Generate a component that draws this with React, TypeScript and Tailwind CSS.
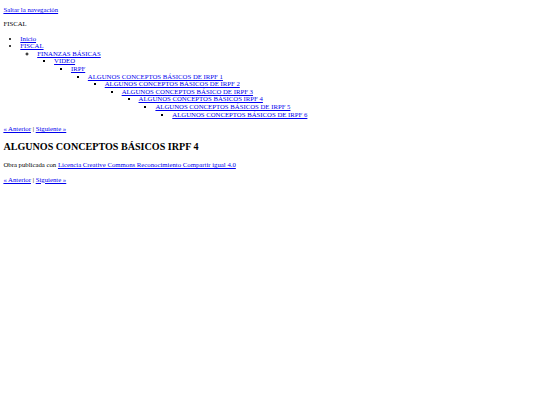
const link = 'text-[#0000ee] underline';

const chain = [
  'ALGUNOS CONCEPTOS BÁSICOS DE IRPF 1',
  'ALGUNOS CONCEPTOS BÁSICOS DE IRPF 2',
  'ALGUNOS CONCEPTOS BÁSICO DE IRPF 3',
  'ALGUNOS CONCEPTOS BÁSICOS IRPF 4',
  'ALGUNOS CONCEPTOS BÁSICOS DE IRPF 5',
  'ALGUNOS CONCEPTOS BÁSICOS DE IRPF 6',
];

// each entry nests inside the one before it
const Chain = ({ items }: { items: string[] }) => {
  if (items.length === 0) return null;
  const [first, ...rest] = items;
  return (
    <ul className="list-[square] pl-[16.9px]">
      <li>
        <a href="#" className={link}>{first}</a>
        <Chain items={rest} />
      </li>
    </ul>
  );
};

const Pager = () => (
  <p>
    <a href="#" className={link}>« Anterior</a> | <a href="#" className={link}>Siguiente »</a>
  </p>
);

export default function App() {
  return (
    <div className="min-h-[405px] bg-white px-[3.4px] pt-[6.2px] font-['Liberation_Serif',serif] text-[6.75px] leading-[7.6px] text-black">
      <p>
        <a href="#" className={link}>Saltar la navegación</a>
      </p>
      <p className="mt-[6.4px]">FISCAL</p>

      {/* navigation tree */}
      <ul className="mt-[6.9px] list-disc pl-[16.9px]">
        <li>
          <a href="#" className={link}>Inicio</a>
        </li>
        <li>
          <a href="#" className={link}>FISCAL</a>
          <ul className="list-[circle] pl-[16.9px]">
            <li>
              <a href="#" className={link}>FINANZAS BÁSICAS</a>
              <ul className="list-[square] pl-[16.9px]">
                <li>
                  <a href="#" className={link}>VIDEO</a>
                  <ul className="list-[square] pl-[16.9px]">
                    <li>
                      <a href="#" className={link}>IRPF</a>
                      <Chain items={chain} />
                    </li>
                  </ul>
                </li>
              </ul>
            </li>
          </ul>
        </li>
      </ul>

      <div className="mt-[6.9px]">
        <Pager />
      </div>

      <h1 className="mt-[8.4px] text-[10.1px] leading-[11.6px] font-bold">ALGUNOS CONCEPTOS BÁSICOS IRPF 4</h1>

      <p className="mt-[8.4px]">
        Obra publicada con{' '}
        <a href="#" className={link}>Licencia Creative Commons Reconocimiento Compartir igual 4.0</a>
      </p>

      <div className="mt-[6.9px]">
        <Pager />
      </div>
    </div>
  );
}
